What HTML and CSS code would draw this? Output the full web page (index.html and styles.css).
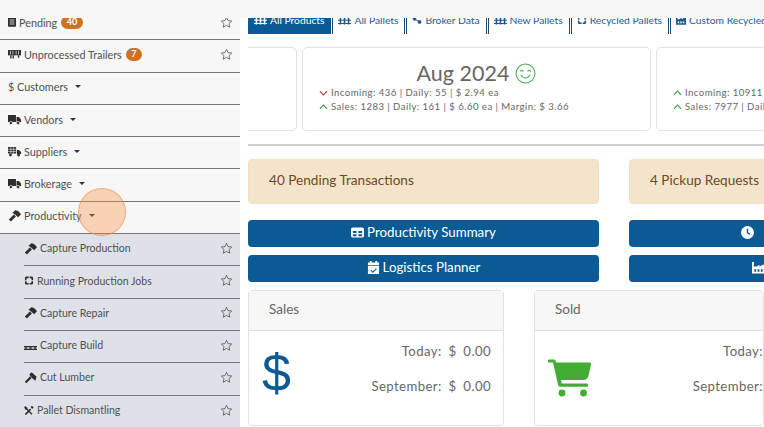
FILE: index.html
```html
<!DOCTYPE html>
<html lang="en">
<head>
<meta charset="utf-8">
<title>Dashboard</title>
<link rel="stylesheet" href="styles.css">
</head>
<body>
<svg class="defs" width="0" height="0" aria-hidden="true">
  <symbol id="star" viewBox="0 0 16 16"><path d="M8 1.600l1.900 4.100 4.500.5-3.300 3.100.9 4.500L8 11.600l-4 2.200.9-4.500L1.600 6.200l4.500-.5z" fill="none" stroke="currentColor" stroke-width="1" stroke-linejoin="round"/></symbol>
  <symbol id="hammer" viewBox="0 0 16 16"><path d="M1 12.800l6.300-6.100 2.400 2.400-6.200 6.200z M5.500 4.500L9 1.500q3 0 5 2.500l2 2.500-3.500 3.500L9 7z" fill="currentColor"/></symbol>
  <symbol id="truck" viewBox="0 0 16 16"><path d="M0 2.500h9.800v8.500H0z M10.500 5h2.800l2.700 3v3h-5.500z" fill="currentColor"/><circle cx="3.500" cy="12.300" r="2" fill="currentColor" stroke="#f7f7f7" stroke-width=".8"/><circle cx="12.300" cy="12.300" r="2" fill="currentColor" stroke="#f7f7f7" stroke-width=".8"/></symbol>
  <symbol id="trailer" viewBox="0 0 16 16"><path d="M0 2.500h16v6.500H0z" fill="currentColor"/><path d="M3 3.500v4.500M6 3.500v4.500M10 3.500v4.500M13 3.500v4.500" stroke="#f7f7f7" stroke-width=".9"/><path d="M3.500 9v4M6.500 9v4M13 9v3" stroke="currentColor" stroke-width="1.700"/></symbol>
  <symbol id="supply" viewBox="0 0 16 16"><path d="M0 2.500h10v8H0z" fill="currentColor"/><path d="M0 5.300h10M0 8h10M3.500 2.500v8M7 2.500v8" stroke="#f7f7f7" stroke-width=".7"/><path d="M11 6h2.500l2.500 2.500V11h-5z" fill="currentColor"/><circle cx="3" cy="12.300" r="1.700" fill="currentColor"/><circle cx="13" cy="12.300" r="1.800" fill="currentColor"/></symbol>
  <symbol id="list" viewBox="2 1 12 14"><rect x="2" y="1" width="12" height="14" rx="1.500" fill="currentColor"/><path d="M4.500 5h7M4.500 8h7M4.500 11h7" stroke="#f7f7f7" stroke-width="1.200"/></symbol>
  <symbol id="cycle" viewBox="0 0 16 16"><path d="M3 1.500h4.500v2.700H5l-1 1v2.300H1.500V3z M9 1.500h4L14.500 3v4.500H12V5l-1-.8H9z M1.500 9H4v2l1 .9h2.500v2.600H3L1.500 13z M12 9h2.500v4L13 14.500H9v-2.600h2l1-1z" fill="currentColor"/></symbol>
  <symbol id="pallet" viewBox="0 0 16 16"><path d="M0 8.500h16v1.500H0zM0 12h16v1.500H0z" fill="currentColor"/><path d="M1 10h2.500v2H1zM6.500 10h3v2h-3zM12.500 10H15v2h-2.500z" fill="currentColor"/></symbol>
  <symbol id="tabpallet" viewBox="0 0 16 16"><path d="M0 3h16v1.300H0zM0 7h16v1.300H0zM0 11h16v1.300H0z" fill="currentColor"/><path d="M2 3h2v10H2zM7 3h2v10H7zM12 3h2v10h-2z" fill="currentColor"/></symbol>
  <symbol id="axe" viewBox="0 0 16 16"><path d="M1 13.200l6.500-6.700 2 2-6.600 6.700z M6.500 4.500L9 1.500l1.500 1 5 4.500-1.500 5-3.200-2.400-2-2.500z" fill="currentColor"/></symbol>
  <symbol id="tools" viewBox="0 0 16 16"><path d="M2 .8l3.500 2.700v1.700l8 8-1.600 1.600-8-8H2.300L.3 3z M11.500 .8c2-.4 3.900 1.200 3.700 3.300l-2.200.9-1.700-1.500zM9.800 4.600l1.700 1.700-7.700 8.400c-1 1-3-.9-2-2z" fill="currentColor"/></symbol>
  <symbol id="grid" viewBox="1 2.500 14 11"><path d="M1 4.500A2 2 0 0 1 3 2.500h10a2 2 0 0 1 2 2v7a2 2 0 0 1-2 2H3a2 2 0 0 1-2-2z M3 6.500v2h4v-2z M9 6.500v2h4v-2z M3 10v2h4v-2z M9 10v2h4v-2z" fill="currentColor" fill-rule="evenodd"/></symbol>
  <symbol id="calendar" viewBox="1 1 14 14"><path d="M4 1h2v1.500h4V1h2v1.500h2v3H2v-3h2zM2 6.500h12V15H2z M10.800 8.800L7.300 12.300l-1.800-1.800-.8.8 2.600 2.600 4.300-4.300z" fill="currentColor" fill-rule="evenodd"/></symbol>
  <symbol id="clock" viewBox="1 1 14 14"><path d="M8 1a7 7 0 1 0 0 14A7 7 0 0 0 8 1z M7.200 4h1.500v3.800l2.500 1.800-.9 1.200-3.100-2.300z" fill="currentColor" fill-rule="evenodd"/></symbol>
  <symbol id="factory" viewBox="1 1 14 14"><path d="M1 2h2v5h2.500l3.500-2v2l3.500-2H15v9.500H1z M3.500 10v2.500h2V10z M7 10v2.500h2V10z M10.500 10v2.500h2V10z" fill="currentColor" fill-rule="evenodd"/></symbol>
  <symbol id="nodes" viewBox="0 0 16 16"><circle cx="4" cy="6" r="3" fill="currentColor"/><circle cx="12" cy="11" r="3" fill="currentColor"/><path d="M4 6l8 5" stroke="currentColor" stroke-width="1.500"/></symbol>
</svg>

<div class="topbar"></div>

<div class="layout">
  <nav class="sidebar">
    <div class="item"><svg class="ic narrow"><use href="#list"/></svg><span>Pending</span><b class="badge">40</b><svg class="star"><use href="#star"/></svg></div>
    <div class="item"><svg class="ic"><use href="#trailer"/></svg><span>Unprocessed Trailers</span><b class="badge">7</b><svg class="star"><use href="#star"/></svg></div>
    <div class="item"><span>$ Customers</span><i class="caret"></i></div>
    <div class="item"><svg class="ic"><use href="#truck"/></svg><span>Vendors</span><i class="caret"></i></div>
    <div class="item"><svg class="ic"><use href="#supply"/></svg><span>Suppliers</span><i class="caret"></i></div>
    <div class="item"><svg class="ic"><use href="#truck"/></svg><span>Brokerage</span><i class="caret"></i></div>
    <div class="item"><svg class="ic"><use href="#hammer"/></svg><span>Productivity</span><i class="caret"></i></div>
    <div class="sub">
      <div class="subitem"><svg class="ic"><use href="#hammer"/></svg><span>Capture Production</span><svg class="star"><use href="#star"/></svg></div>
      <div class="subitem"><svg class="ic small"><use href="#cycle"/></svg><span>Running Production Jobs</span><svg class="star"><use href="#star"/></svg></div>
      <div class="subitem"><svg class="ic"><use href="#hammer"/></svg><span>Capture Repair</span><svg class="star"><use href="#star"/></svg></div>
      <div class="subitem"><svg class="ic"><use href="#pallet"/></svg><span>Capture Build</span><svg class="star"><use href="#star"/></svg></div>
      <div class="subitem"><svg class="ic"><use href="#axe"/></svg><span>Cut Lumber</span><svg class="star"><use href="#star"/></svg></div>
      <div class="subitem"><svg class="ic small"><use href="#tools"/></svg><span>Pallet Dismantling</span><svg class="star"><use href="#star"/></svg></div>
    </div>
  </nav>

  <main class="main">
    <div class="tabs">
      <a class="tab active"><svg class="tic"><use href="#tabpallet"/></svg>All Products</a>
      <a class="tab"><svg class="tic"><use href="#tabpallet"/></svg>All Pallets</a>
      <a class="tab"><svg class="tic slim"><use href="#nodes"/></svg>Broker Data</a>
      <a class="tab"><svg class="tic"><use href="#tabpallet"/></svg>New Pallets</a>
      <a class="tab"><svg class="tic slim"><use href="#cycle"/></svg>Recycled Pallets</a>
      <a class="tab"><svg class="tic slim"><use href="#factory"/></svg>Custom Recycled</a>
    </div>

    <div class="months">
      <div class="month"></div>
      <div class="month">
        <h2 class="mtitle">Aug 2024 <svg class="smile" viewBox="0 0 20 20"><circle cx="10" cy="10" r="9" fill="none" stroke="currentColor" stroke-width="1"/><path d="M5 8q1.500-2 3 0M12 8q1.500-2 3 0M5.500 11.500q4.500 5.500 9 0" fill="none" stroke="currentColor" stroke-width="1"/></svg></h2>
        <p class="stat"><svg class="chev down" viewBox="0 0 10 6"><path d="M1 1l4 4 4-4" fill="none" stroke="currentColor" stroke-width="1.300"/></svg>Incoming: 436 | Daily: 55 | $ 2.94 ea</p>
        <p class="stat"><svg class="chev up" viewBox="0 0 10 6"><path d="M1 5l4-4 4 4" fill="none" stroke="currentColor" stroke-width="1.300"/></svg>Sales: 1283 | Daily: 161 | $ 6.60 ea | Margin: $ 3.66</p>
      </div>
      <div class="month">
        <h2 class="mtitle">&nbsp;</h2>
        <p class="stat"><svg class="chev up" viewBox="0 0 10 6"><path d="M1 5l4-4 4 4" fill="none" stroke="currentColor" stroke-width="1.300"/></svg>Incoming: 10911</p>
        <p class="stat"><svg class="chev up" viewBox="0 0 10 6"><path d="M1 5l4-4 4 4" fill="none" stroke="currentColor" stroke-width="1.300"/></svg>Sales: 7977 | Daily</p>
      </div>
    </div>
    <hr class="rule">

    <div class="two">
      <div class="alert">40 Pending Transactions</div>
      <div class="alert">4 Pickup Requests</div>
    </div>
    <div class="two btns">
      <a class="btn"><svg class="bic"><use href="#grid"/></svg>Productivity Summary</a>
      <a class="btn icon-clock"><svg class="bic"><use href="#clock"/></svg></a>
      <a class="btn"><svg class="bic"><use href="#calendar"/></svg>Logistics Planner</a>
      <a class="btn icon-factory"><svg class="bic"><use href="#factory"/></svg></a>
    </div>

    <div class="panels">
      <section class="panel">
        <header class="phead">Sales</header>
        <div class="pbody">
          <span class="dollar">$</span>
          <div class="vals"><p>Today: $ 0.00</p><p>September: $ 0.00</p></div>
        </div>
      </section>
      <section class="panel wide">
        <header class="phead">Sold</header>
        <div class="pbody">
          <svg class="cart" viewBox="0 0 44 40"><path d="M1 2.500h5.500l2 3H41.800q1.500 0 1.200 2l-2.200 10q-1 5-5 5.500H13l.7 3.500H38.500a1.600 1.600 0 0 1 0 3.300H12q-1.500 0-2-2L5 5.500H1.500A1.500 1.500 0 0 1 1 2.500z" fill="currentColor"/><circle cx="14" cy="36" r="3.400" fill="currentColor"/><circle cx="35.500" cy="36" r="3.400" fill="currentColor"/></svg>
          <div class="vals"><p>Today:</p><p>September:</p></div>
        </div>
      </section>
    </div>
  </main>
</div>

<div class="ripple"></div>
</body>
</html>
```

FILE: styles.css
```css
* { box-sizing: border-box; }
html, body { margin: 0; height: 100%; overflow: hidden; }
body { font-family: "Lato", "Open Sans", sans-serif; color: #555; background: #fff; position: relative; }
.defs { position: absolute; }
p, h2 { margin: 0; font-weight: 400; }

.topbar { position: absolute; top: 0; left: 0; right: 0; height: 18px; background: #f7f7f7; z-index: 3; }
.ripple { position: absolute; left: 78px; top: 188px; width: 48px; height: 48px; border-radius: 50%; background: rgba(250, 140, 70, .36); border: 1.500px solid rgba(245, 140, 70, .55); z-index: 4; }

.layout { display: flex; height: 427px; overflow: hidden; }

.sidebar { flex: 0 0 240px; background: #f7f7f7; padding-top: 8px; font-size: 10.800px; color: #505050; overflow: hidden; }
.item { height: 32.300px; display: flex; align-items: center; padding: 0 7px 3px 8px; gap: 3px; border-bottom: 1px solid #777; }
.sub { background: #dee2e8; padding-left: 24px; }
.subitem { height: 32.300px; display: flex; align-items: center; padding: 0 7px 3px 0; gap: 3px; border-bottom: 1px solid #777; font-size: 10.550px; }
.subitem:last-child { border-bottom: 0; }
.ic { width: 13px; height: 13px; flex: none; color: #2e2e2e; }
.ic.small { width: 10px; height: 11px; }
.ic.narrow { width: 8px; height: 10px; }
.star { width: 13px; height: 13px; margin-left: auto; flex: none; color: #555; }
.badge { background: #d2701c; color: #fff; font-size: 9px; font-weight: 700; border-radius: 8px; padding: 1.500px 5.500px; margin-left: 1px; line-height: 10px; }
.caret { width: 0; height: 0; border: 3px solid transparent; border-top-color: #333; border-bottom: 0; margin-left: 4px; }

.main { flex: none; width: 516px; margin-left: 8px; overflow: hidden; }

.tabs { display: flex; height: 34px; gap: 1px; white-space: nowrap; width: 560px; }
.tab { display: flex; align-items: center; gap: 3px; height: 34px; padding: 13px 6px 7px 5px; font-size: 10.300px; color: #1d5a8f; border-left: 1px solid #1d4a70; border-right: 1px solid #1d4a70; flex: none; }
.tab:first-child { border-left: 0; }
.tab.active { background: #0b5a94; color: #fff; padding: 13px 6px 7px 6px; }
.tic { width: 13px; height: 13px; flex: none; }
.tic.slim { width: 10px; height: 10px; }

.months { display: flex; gap: 5px; margin: 13px 0 0 -300px; width: 1200px; height: 84px; }
.month { flex: 0 0 349px; border: 1px solid #e2e2e2; border-radius: 5px; padding: 12px 16px 0; }
.mtitle { font-size: 21.500px; color: #666; line-height: 26px; display: flex; align-items: center; justify-content: center; gap: 6px; height: 26px; }
.smile { width: 21px; height: 21px; color: #4caf50; }
.stat { font-size: 9.600px; letter-spacing: .45px; color: #666; line-height: 14px; white-space: nowrap; display: flex; align-items: center; gap: 3px; }
.chev { width: 9px; height: 6px; flex: none; }
.chev.up { color: #3f9c47; }
.chev.down { color: #b8434f; }

.rule { border: 0; height: 2px; background: #cfcfcf; margin: 13px 0; }

.two { display: grid; grid-template-columns: 351px 351px; column-gap: 30px; }
.alert { height: 45px; background: #f5e4cc; border: 1px solid #f2dfc6; border-radius: 4px; font-size: 13.600px; color: #6b4a22; display: flex; align-items: center; padding: 0 20px 3px; }
.btns { row-gap: 8px; margin-top: 16px; }
.btn { height: 27px; background: #0b5a94; color: #fff; border-radius: 4px; font-size: 13.300px; display: flex; align-items: center; justify-content: center; gap: 3px; padding-bottom: 3px; }
.btn.icon-clock { justify-content: flex-start; padding-left: 112px; }
.btn.icon-factory { justify-content: flex-start; padding-left: 123px; }
.bic { width: 13px; height: 13px; flex: none; }

.panels { display: flex; gap: 30px; margin-top: 8px; }
.panel { flex: 0 0 256px; height: 136px; border: 1px solid #e2e2e2; border-radius: 4px; }
.panel.wide { flex-basis: 230px; }
.phead { height: 40px; background: #f7f7f7; border-bottom: 1px solid #e0e0e0; font-size: 13.500px; color: #666; display: flex; align-items: center; padding: 0 0 3px 20px; }
.pbody { display: flex; justify-content: space-between; padding: 0 12px 0 13px; }
.wide .pbody { padding-right: 0; }
.vals { text-align: right; font-size: 13.200px; letter-spacing: .4px; word-spacing: 3px; color: #666; padding-top: 12px; }
.vals p { line-height: 17px; margin-bottom: 18px; }
.dollar { font-family: "Liberation Sans", sans-serif; font-size: 52px; line-height: 60px; color: #0b5a94; padding-top: 12px; }
.cart { width: 44px; height: 40px; color: #43ac33; margin-top: 26px; }
```
